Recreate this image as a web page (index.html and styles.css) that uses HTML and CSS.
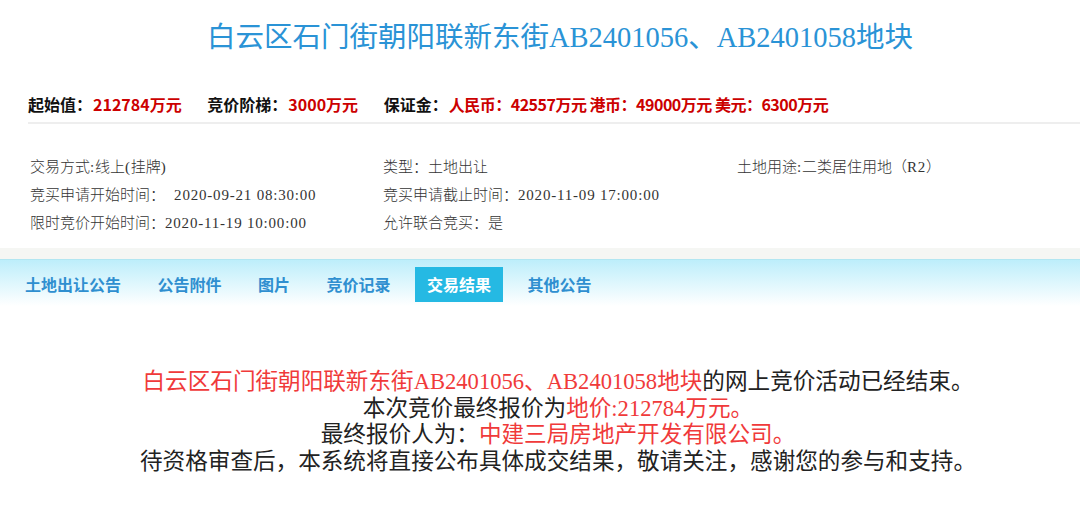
FILE: index.html
```html
<!DOCTYPE html>
<html lang="zh-CN">
<head>
<meta charset="utf-8">
<title>白云区石门街朝阳联新东街AB2401056、AB2401058地块</title>
<link rel="stylesheet" href="styles.css">
</head>
<body>
<h1 class="title">白云区石门街朝阳联新东街AB2401056、AB2401058地块</h1>

<div class="price-row">
  <span class="label">起始值：</span><span class="value">212784万元</span>
  <span class="label">竞价阶梯：</span><span class="value">3000万元</span>
  <span class="label">保证金：</span><span class="value deposit">人民币：42557万元 港币：49000万元 美元：6300万元</span>
</div>

<div class="info">
  <div class="cell">交易方式<span class="latin">:</span>线上<span class="latin">(</span>挂牌<span class="latin">)</span></div>
  <div class="cell">类型：土地出让</div>
  <div class="cell">土地用途<span class="latin">:</span>二类居住用地（<span class="latin">R2</span>）</div>
  <div class="cell">竞买申请开始时间：<span class="latin">&nbsp;&nbsp;2020-09-21 08:30:00</span></div>
  <div class="cell">竞买申请截止时间：<span class="latin">2020-11-09 17:00:00</span></div>
  <div class="cell"></div>
  <div class="cell">限时竞价开始时间：<span class="latin">2020-11-19 10:00:00</span></div>
  <div class="cell">允许联合竞买：是</div>
  <div class="cell"></div>
</div>

<div class="band"></div>

<nav class="tabs">
  <span class="tab">土地出让公告</span>
  <span class="tab">公告附件</span>
  <span class="tab">图片</span>
  <span class="tab">竞价记录</span>
  <span class="tab active">交易结果</span>
  <span class="tab">其他公告</span>
</nav>

<div class="result">
  <p><span class="red">白云区石门街朝阳联新东街AB2401056、AB2401058地块</span>的网上竞价活动已经结束。</p>
  <p>本次竞价最终报价为<span class="red">地价:212784万元。</span></p>
  <p>最终报价人为：<span class="red">中建三局房地产开发有限公司。</span></p>
  <p>待资格审查后，本系统将直接公布具体成交结果，敬请关注，感谢您的参与和支持。</p>
</div>
</body>
</html>
```

FILE: styles.css
```css
html, body {
  margin: 0;
  padding: 0;
  background: #ffffff;
}

body {
  font-family: "Liberation Serif", "Noto Sans CJK SC", serif;
  color: #333333;
}

.title {
  margin: 0;
  padding: 18px 0 0 40px;
  height: 40px;
  line-height: 40px;
  text-align: center;
  font-size: 28.5px;
  font-weight: 400;
  color: #2a93d6;
}

.price-row {
  margin: 34px 0 0 28px;
  padding-bottom: 6px;
  height: 24px;
  line-height: 24px;
  border-bottom: 2px solid #eeeeee;
  font-family: "Noto Sans CJK SC", sans-serif;
  font-size: 16px;
  font-weight: 700;
  white-space: nowrap;
}

.price-row .label {
  color: #111111;
}

.price-row .value {
  color: #cc0000;
  margin-left: 1px;
  margin-right: 22px;
}

.price-row .deposit {
  letter-spacing: -0.5px;
}

.info {
  display: grid;
  grid-template-columns: 353px 354px 1fr;
  grid-auto-rows: 28px;
  padding: 28px 0 12px 30px;
  font-family: "Noto Sans CJK SC", sans-serif;
  font-size: 15px;
  font-weight: 300;
  color: #333333;
}

.cell {
  line-height: 28px;
  white-space: nowrap;
}

.latin {
  font-family: "Liberation Serif", serif;
  letter-spacing: 0.8px;
}

.band {
  height: 11px;
  background: #f5f6f3;
}

.tabs {
  display: flex;
  gap: 12.5px;
  height: 35px;
  padding: 7px 0 4px 13px;
  border-top: 1px solid #b2e6f1;
  background: linear-gradient(#bdeefb, #ffffff);
}

.tab {
  padding: 0 12px;
  line-height: 35px;
  font-family: "Noto Sans CJK SC", sans-serif;
  font-size: 16px;
  font-weight: 700;
  color: #2f8fd0;
}

.tab.active {
  background: #25b9e3;
  color: #ffffff;
}

.result {
  margin-top: 63px;
  padding-left: 36px;
  text-align: center;
  font-size: 22.6px;
  color: #222222;
}

.result p {
  margin: 0;
  line-height: 26.7px;
  white-space: nowrap;
}

.red {
  color: #f03a3a;
}
```
